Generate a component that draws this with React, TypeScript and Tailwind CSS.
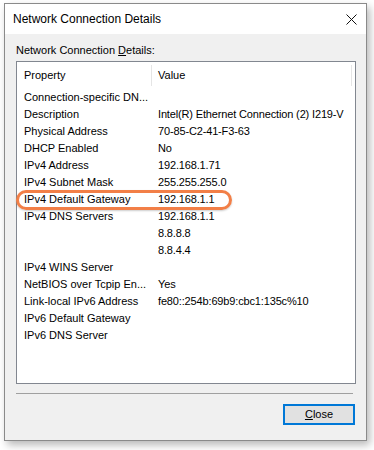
import React from "react";

const rows: [string, string][] = [
  ["Connection-specific DN...", ""],
  ["Description", "Intel(R) Ethernet Connection (2) I219-V"],
  ["Physical Address", "70-85-C2-41-F3-63"],
  ["DHCP Enabled", "No"],
  ["IPv4 Address", "192.168.1.71"],
  ["IPv4 Subnet Mask", "255.255.255.0"],
  ["IPv4 Default Gateway", "192.168.1.1"],
  ["IPv4 DNS Servers", "192.168.1.1"],
  ["", "8.8.8.8"],
  ["", "8.8.4.4"],
  ["IPv4 WINS Server", ""],
  ["NetBIOS over Tcpip En...", "Yes"],
  ["Link-local IPv6 Address", "fe80::254b:69b9:cbc1:135c%10"],
  ["IPv6 Default Gateway", ""],
  ["IPv6 DNS Server", ""],
];

const App = () => {
  return (
    <div
      className="w-[374px] h-[450px] bg-white pt-[3px] pl-[4px] text-black"
      style={{ fontFamily: '"Liberation Sans", Arial, sans-serif' }}
    >
      <div className="w-[363px] h-[438px] border border-[#8a8a8a] bg-[#f0f0f0] flex flex-col shadow-[3px_4px_8px_rgba(0,0,0,0.28)]">
        {/* title bar */}
        <div className="h-[30px] bg-white flex items-center justify-between pl-[8px] pr-[9px]">
          <span className="text-[12px]">Network Connection Details</span>
          <svg width="11" height="11" viewBox="0 0 11 11">
            <path d="M0.5 0.5 L10.5 10.5 M10.5 0.5 L0.5 10.5" stroke="#111" strokeWidth="1" />
          </svg>
        </div>

        <div className="pl-[11px] pr-[10px] pt-[9px] flex flex-col">
          <div className="h-[14px] leading-[14px] text-[11px]">
            Network Connection <u className="underline-offset-1">D</u>etails:
          </div>

          {/* list box */}
          <div className="relative mt-[4px] h-[323px] border border-[#828790] bg-white text-[11px]">
            <div className="h-[27px] flex">
              <div className="w-[135px] flex items-center pl-[7px] my-[3px] border-r border-[#e5e5e5]">
                Property
              </div>
              <div className="w-[200px] flex items-center pl-[6px] my-[3px] border-r border-[#e5e5e5]">
                Value
              </div>
            </div>
            {rows.map(([k, v], i) => (
              <div key={i} className="h-[17px] flex items-center whitespace-nowrap">
                <div className="w-[141px] pl-[7px]">{k}</div>
                <div className="tracking-[-0.15px]">{v}</div>
              </div>
            ))}
            <div className="absolute left-[-1px] top-[128px] w-[216px] h-[20px] rounded-full border-[3px] border-[#f27f47] shadow-[0_1px_2px_rgba(0,0,0,0.2)]" />
          </div>

          <div className="mt-[9px] h-px bg-[#a0a0a0] mr-[3px]" />

          <div className="mt-[10px] flex justify-end pr-[1px]">
            <button className="w-[72px] h-[21px] border-2 border-[#0078d7] bg-[#e1e1e1] text-[11px] leading-none flex items-center justify-center">
              <span>
                <u className="underline-offset-1">C</u>lose
              </span>
            </button>
          </div>
        </div>
      </div>
    </div>
  );
};

export default App;
